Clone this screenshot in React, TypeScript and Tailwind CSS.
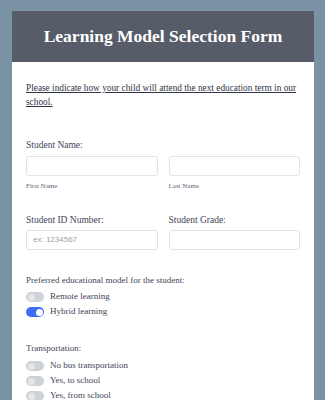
const serif = { fontFamily: '"Liberation Serif", "DejaVu Serif", serif' };

const Toggle = ({ on }: { on?: boolean }) => (
  <span
    className={
      on
        ? "flex h-[10px] w-[18px] items-center justify-end rounded-full bg-[#3b6ff0] px-[1.5px]"
        : "flex h-[10px] w-[18px] items-center justify-start rounded-full bg-[#cdd1d8] px-[1.5px]"
    }
  >
    <span
      className={
        on
          ? "block h-[7px] w-[7px] rounded-full bg-white"
          : "block h-[7px] w-[7px] rounded-full bg-[#e4e6ea]"
      }
    />
  </span>
);

const Option = ({ label, on }: { label: string; on?: boolean }) => (
  <div className="flex h-[15px] items-center gap-[6px]">
    <Toggle on={on} />
    <span className="text-[9px] text-[#3e4556]">{label}</span>
  </div>
);

const Field = ({ placeholder }: { placeholder?: string }) => (
  <div className="flex h-[20px] items-center rounded-[3px] border border-[#dfe3eb] bg-white px-[6px]">
    {placeholder && (
      <span
        className="text-[8px] text-[#9aa0ab]"
        style={{ fontFamily: '"Liberation Sans", Arial, sans-serif' }}
      >
        {placeholder}
      </span>
    )}
  </div>
);

export default function App() {
  return (
    <div className="h-[400px] w-[325px] overflow-hidden bg-[#7992a4] pl-[12px] pr-[11px] pt-[11px]" style={serif}>
      <div className="flex h-[51px] items-center justify-center bg-[#575c69]">
        <h1 className="text-[17.5px] font-bold text-white">Learning Model Selection Form</h1>
      </div>
      <div className="h-[400px] bg-white px-[14px] pt-[19px] text-[#3e4556]">
        <p className="text-[9.3px] leading-[14px] text-[#2f3446] underline">
          Please indicate how your child will attend the next education term in our school.
        </p>

        <div className="mt-[29px] text-[9.5px] leading-[14px]">Student Name:</div>
        <div className="mt-[4px] grid grid-cols-2 gap-[11px]">
          <div>
            <Field />
            <div className="mt-[5px] text-[7px] text-[#5f6573]">First Name</div>
          </div>
          <div>
            <Field />
            <div className="mt-[5px] text-[7px] text-[#5f6573]">Last Name</div>
          </div>
        </div>

        <div className="mt-[21px] grid grid-cols-2 gap-[11px]">
          <div>
            <div className="text-[9.5px] leading-[14px]">Student ID Number:</div>
            <div className="mt-[3px]">
              <Field placeholder="ex: 1234567" />
            </div>
          </div>
          <div>
            <div className="text-[9.5px] leading-[14px]">Student Grade:</div>
            <div className="mt-[3px]">
              <Field />
            </div>
          </div>
        </div>

        <div className="mt-[23px] text-[9px] leading-[14px]">Preferred educational model for the student:</div>
        <div className="mt-[3px] flex flex-col">
          <Option label="Remote learning" />
          <Option label="Hybrid learning" on />
        </div>

        <div className="mt-[21px] text-[9px] leading-[14px]">Transportation:</div>
        <div className="mt-[4px] flex flex-col">
          <Option label="No bus transportation" />
          <Option label="Yes, to school" />
          <Option label="Yes, from school" />
        </div>
      </div>
    </div>
  );
}
